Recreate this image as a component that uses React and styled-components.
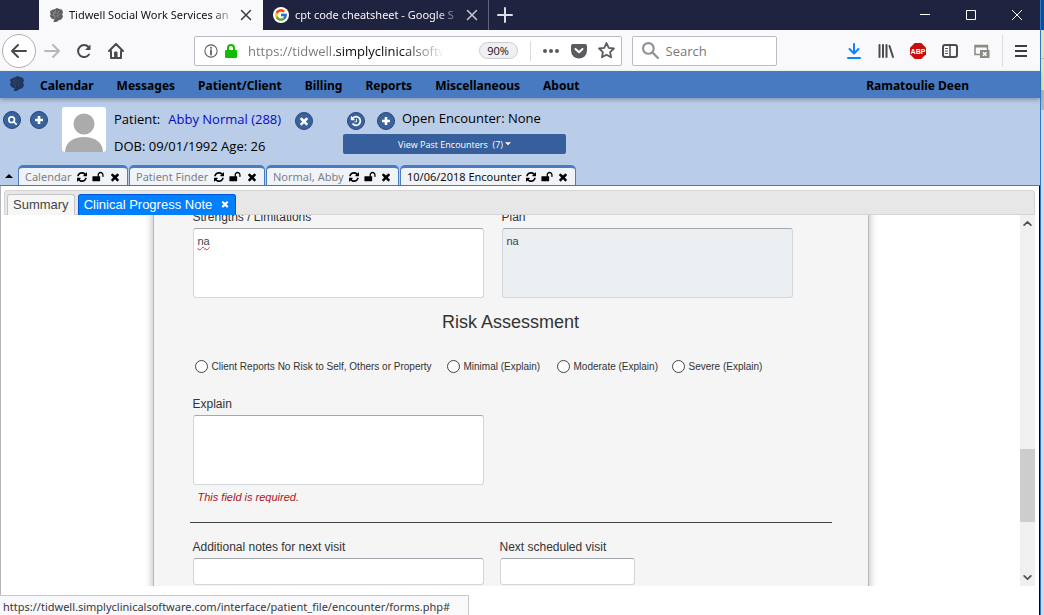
import React from 'react';
import styled, { createGlobalStyle } from 'styled-components';
import { FcGoogle } from 'react-icons/fc';

const ui = '"Open Sans", "Noto Sans", sans-serif';
const compact = '"Noto Sans", "Open Sans", sans-serif';
const arial = '"Liberation Sans", Arial, sans-serif';

const Global = createGlobalStyle`
  * { box-sizing: border-box; }
  html, body, #root { height: 100%; margin: 0; }
  body { font-family: ${ui}; font-size: 12px; color: #000; background: #fff; overflow: hidden; }
  button, input, textarea { font: inherit; margin: 0; }
  button { padding: 0; border: 0; background: none; color: inherit; }
  a { color: inherit; text-decoration: none; }
  svg { display: block; flex: none; }
`;

const Desktop = styled.div`
  display: flex;
  height: 100%;
`;

const Window = styled.div`
  flex: 1;
  min-width: 0;
  display: flex;
  flex-direction: column;
`;

const Backdrop = styled.div`
  width: 4px;
  border-left: 1px solid #2b7cc8;
  background: linear-gradient(#144a93 0 30px, #e3e3a4 30px 58px, #b9bd8e 58px 59px, #e3e3a4 59px 90px, #b4b4b4 90px 110px, #d6d8dc 110px);
`;

/* Browser tab strip */
const TabStrip = styled.div`
  display: flex;
  height: 30px;
  padding-left: 39px;
  background: #20233f;
  color: #f5f5f8;
`;

const BrowserTab = styled.div`
  display: flex;
  align-items: center;
  gap: 6px;
  width: ${(p) => (p.$active ? 224 : 226)}px;
  padding: 0 10px;
  background: ${(p) => (p.$active ? '#f9f9fb' : 'transparent')};
  color: ${(p) => (p.$active ? '#111' : '#f5f5f8')};
  border-right: 1px solid ${(p) => (p.$active ? 'transparent' : '#62657c')};
`;

const TabTitle = styled.span`
  flex: 1;
  margin-right: -4px;
  overflow: hidden;
  white-space: nowrap;
  font-family: ${compact};
  font-size: 11px;
  line-height: 20px;
  mask-image: linear-gradient(90deg, #000 84%, transparent);
`;

const GoogleBadge = styled.span`
  padding: 1px;
  border-radius: 50%;
  background: #fff;
`;

const NewTab = styled.button`
  width: 32px;
  display: grid;
  place-items: center;
`;

const WindowButtons = styled.div`
  display: flex;
  margin-left: auto;
`;

const WindowButton = styled.button`
  width: 46px;
  display: grid;
  place-items: center;
`;

/* Browser toolbar */
const Toolbar = styled.div`
  display: flex;
  align-items: center;
  height: 41px;
  padding: 0 2px;
  background: #f9f9fb;
  color: #4a4a4f;
`;

const NavButtons = styled.div`
  display: flex;
  align-items: center;
  width: 192px;
`;

const ToolButton = styled.button`
  width: 32px;
  height: 32px;
  display: grid;
  place-items: center;
`;

const BackButton = styled(ToolButton)`
  width: 34px;
  height: 34px;
  border: 1px solid #aeaeb2;
  border-radius: 50%;
  background: #fff;
`;

const Field = styled.div`
  display: flex;
  align-items: center;
  min-width: 0;
  height: 30px;
  padding: 0 6px 0 9px;
  border: 1px solid #bbbbc4;
  border-radius: 2px;
  background: #fff;
`;

const UrlField = styled(Field)`
  flex: 410;
  gap: 7px;
  margin-right: 10px;
`;

const UrlInput = styled.input`
  flex: 1;
  min-width: 0;
  margin-left: 4px;
  padding: 0;
  border: 0;
  outline: 0;
  font-size: 13px;
  color: transparent;
  background: linear-gradient(90deg, #77777b 0 86px, #0c0c0d 86px 154px, #fff 196px);
  background-clip: text;
`;

const Zoom = styled.button`
  width: 39px;
  height: 17px;
  border: 1px solid #ccccd0;
  border-radius: 9px;
  background: #f0f0f2;
  color: #111;
  font-size: 11px;
  line-height: 14px;
`;

const UrlActions = styled.div`
  display: flex;
  align-items: center;
  gap: 11px;
  margin-left: 5px;
  padding-left: 11px;
  height: 20px;
  border-left: 1px solid #dcdce0;
`;

const SearchField = styled(Field)`
  flex: 128;
  gap: 7px;
`;

const SearchInput = styled.input`
  flex: 1;
  min-width: 0;
  padding: 0;
  border: 0;
  outline: 0;
  font-size: 13px;
  background: none;
  &::placeholder { color: #77777b; opacity: 1; }
`;

const Extensions = styled.div`
  display: flex;
  flex: 261;
  justify-content: flex-end;
`;

const MenuButton = styled(ToolButton)`
  margin-left: 4px;
  width: 36px;
  border-left: 1px solid #dcdce0;
`;

/* Application menu */
const AppMenu = styled.nav`
  position: relative;
  display: flex;
  align-items: center;
  gap: 23px;
  height: 27px;
  padding: 2px 71px 0 9px;
  background: #477ac1;
  box-shadow: 0 2px 4px rgba(60, 70, 90, 0.4);
  font-family: ${compact};
  font-size: 12px;
  font-weight: 700;
`;

const MenuLogo = styled.a`
  margin: 0 -7px 5px 0;
`;

const UserLink = styled.a`
  margin-left: auto;
`;

/* Patient header */
const PatientHeader = styled.header`
  display: flex;
  align-items: flex-start;
  height: 67px;
  padding: 9px 3px 0;
  background: #b9cce8;
  font-size: 13px;
`;

const RoundButton = styled.button`
  display: grid;
  place-items: center;
  width: 18px;
  height: 18px;
  border: 1px solid #26487c;
  border-radius: 50%;
  background: #3a629c;
  color: #fff;
`;

const HeaderTools = styled.div`
  display: flex;
  gap: 9px;
  width: 59px;
  padding-top: 4px;
`;

const Avatar = styled.div`
  width: 44px;
  height: 45px;
  margin-right: 8px;
  border-radius: 3px;
  background: #fff;
  overflow: hidden;
`;

const PatientInfo = styled.div`
  width: 229px;
`;

const InfoLine = styled.div`
  display: flex;
  align-items: center;
  height: 27px;
  padding-bottom: 4px;
  white-space: nowrap;
`;

const PatientLink = styled.a`
  margin: 0 auto 0 8px;
  color: #0a0ac0;
`;

const ClearButton = styled(RoundButton)`
  margin: 4px 30px 0 0;
`;

const Encounter = styled.div`
  width: 223px;
`;

const EncounterLine = styled.div`
  display: flex;
  align-items: center;
  gap: 7px;
  height: 27px;
  padding-left: 4px;
`;

const EncounterTitle = styled.span`
  line-height: 20px;
  padding-bottom: 5px;
`;

const HistoryButton = styled(RoundButton)`
  margin-right: 5px;
`;

const PastButton = styled.button`
  display: flex;
  align-items: center;
  justify-content: center;
  gap: 2px;
  width: 100%;
  height: 20px;
  border-radius: 2px;
  background: #375f9b;
  color: #fff;
  font-size: 9px;
`;

const AppTabs = styled.div`
  display: flex;
  gap: 1px;
  height: 21px;
  padding-left: 5px;
  background: #b9cce8;
  border-bottom: 1px solid #4179c0;
`;

const Collapse = styled.button`
  width: 12px;
`;

const AppTab = styled.div`
  display: flex;
  align-items: center;
  gap: 4px;
  width: ${(p) => p.$width}px;
  padding: 0 6px;
  border: 1px solid #4a7cc2;
  border-top-width: 3px;
  border-bottom: 0;
  border-radius: 5px 5px 0 0;
  background: #f0f4f9;
  color: ${(p) => (p.$active ? '#111' : '#7d7f83')};
`;

const AppTabName = styled.span`
  flex: 1;
  font-family: ${compact};
  font-size: 11px;
  line-height: 16px;
  white-space: nowrap;
`;

const IconButton = styled.button`
  color: #000;
  width: 13px;
  display: grid;
  place-items: center;
`;

/* Encounter frame */
const Frame = styled.main`
  flex: 1;
  min-height: 0;
  display: flex;
  flex-direction: column;
  padding: 4px 4px 29px 0;
  border-left: 1px solid #b5b5bb;
  border-right: 1px solid #000;
  background: #fff;
  font-family: ${arial};
`;

const NoteTabs = styled.div`
  display: flex;
  align-items: flex-end;
  gap: 3px;
  height: 25px;
  margin-left: 3px;
  padding-left: 2px;
  border: 1px solid #d4d4d4;
  border-radius: 3px 3px 0 0;
  background: #e7e7e7;
`;

const NoteTab = styled.button`
  display: flex;
  align-items: center;
  gap: 8px;
  height: 21px;
  padding: 0 5px 2px;
  margin-bottom: -1px;
  border: 1px solid ${(p) => (p.$active ? '#0055d4' : '#c5c5c5')};
  border-bottom: 0;
  border-radius: 3px 3px 0 0;
  background: ${(p) => (p.$active ? '#007fff' : '#f6f6f6')};
  color: ${(p) => (p.$active ? '#fff' : '#454545')};
  font-size: 13px;
`;

const Pane = styled.div`
  flex: 1;
  min-height: 0;
  display: flex;
  overflow: hidden;
`;

const PaneBody = styled.div`
  flex: 1;
  height: 100%;
  overflow: hidden;
`;

const Form = styled.form`
  max-width: 716px;
  min-height: 110%;
  margin: -7px auto 0;
  padding: 0 36px;
  border: 1px solid #b9b9b9;
  background: #f5f5f5;
  box-shadow: 0 0 8px rgba(0, 0, 0, 0.3);
  color: #333;
  font-size: 12px;
`;

const FieldRow = styled.div`
  display: grid;
  grid-template-columns: 291px ${(p) => (p.$narrow ? '135px' : '291px')};
  gap: ${(p) => (p.$narrow ? 16 : 18)}px;
  padding: 0 3px;
`;

const Label = styled.label`
  display: block;
  height: 19px;
  line-height: 16px;
`;

const TextArea = styled.textarea`
  display: block;
  width: 100%;
  height: 70px;
  padding: 6px 4px;
  border: 1px solid #d3d6da;
  border-top-color: #a3a8ae;
  border-radius: 3px;
  resize: none;
  outline: 0;
  background: ${(p) => (p.$filled ? '#ebeff1' : '#fff')};
  color: #444;
  font-size: 11px;
  line-height: 13px;
  text-decoration: ${(p) => (p.$misspelt ? 'underline wavy #c0392b 1px' : 'none')};
`;

const TextBox = styled.input`
  display: block;
  width: 100%;
  height: 27px;
  border: 1px solid #d3d6da;
  border-top-color: #a3a8ae;
  border-radius: 3px;
  background: #fff;
`;

const Heading = styled.h2`
  margin: 12px 0 21px;
  font-size: 18px;
  font-weight: 400;
  line-height: 24px;
  text-align: center;
`;

const Options = styled.div`
  display: grid;
  grid-template-columns: 252px 110px 115px auto;
  align-items: center;
  height: 22px;
  margin-bottom: 19px;
  padding-left: 5px;
  white-space: nowrap;
`;

const Option = styled.label`
  display: flex;
  align-items: center;
  gap: 4px;
  font-size: 10px;
`;

const Radio = styled.input`
  appearance: none;
  flex: none;
  width: 13px;
  height: 13px;
  border: 1px solid #444;
  border-radius: 50%;
  background: #fff;
`;

const ErrorText = styled.p`
  margin: 4px 8px 0;
  color: #b01217;
  font-size: 11px;
  font-style: italic;
  line-height: 16px;
`;

const Rule = styled.hr`
  margin: 17px 0 16px;
  border: 0;
  border-top: 1px solid #444;
`;

const ScrollBar = styled.div`
  display: flex;
  flex-direction: column;
  width: 15px;
  background: #f0f0f0;
  color: #505050;
`;

const ScrollButton = styled.button`
  display: grid;
  place-items: center;
  height: 17px;
`;

const Track = styled.div`
  flex: 1;
  display: flex;
  flex-direction: column;
`;

const Thumb = styled.div`
  flex: 0 0 73px;
  background: #cdcdcd;
`;

const TrackGap = styled.div`
  flex: ${(p) => p.$share};
`;

const StatusBar = styled.div`
  position: fixed;
  left: 0;
  bottom: 0;
  height: 20px;
  padding: 1px 18px 0 3px;
  border: 1px solid #c8c8cc;
  border-left: 0;
  border-bottom: 0;
  background: #f9f9fb;
  color: #38383d;
  font-family: ${compact};
  font-size: 11px;
  line-height: 20px;
`;

const glyphs = {
  refresh: ['0 0 1536 1792', 'M1511 1056q0 5-1 7-64 268-268 434.5t-478 166.5q-146 0-282.5-55t-243.5-157l-129 129q-19 19-45 19t-45-19-19-45v-448q0-26 19-45t45-19h448q26 0 45 19t19 45-19 45l-137 137q71 66 161 102t187 36q134 0 250-65t186-179q11-17 53-117 8-23 30-23h192q13 0 22.5 9.5t9.5 22.5zm25-800v448q0 26-19 45t-45 19h-448q-26 0-45-19t-19-45 19-45l138-138q-148-137-349-137-134 0-250 65t-186 179q-11 17-53 117-8 23-30 23h-199q-13 0-22.5-9.5t-9.5-22.5v-7q65-268 270-434.5t480-166.5q146 0 284 55.5t245 156.5l130-129q19-19 45-19t45 19 19 45z'],
  times: ['0 0 1792 1792', 'M1490 1322q0 40-28 68l-136 136q-28 28-68 28t-68-28l-294-294-294 294q-28 28-68 28t-68-28l-136-136q-28-28-28-68t28-68l294-294-294-294q-28-28-28-68t28-68l136-136q28-28 68-28t68 28l294 294 294-294q28-28 68-28t68 28l136 136q28 28 28 68t-28 68l-294 294 294 294q28 28 28 68z'],
  unlock: ['0 0 1792 1792', 'M1728 576v256q0 26-19 45t-45 19h-64q-26 0-45-19t-19-45v-256q0-106-75-181t-181-75-181 75-75 181v192h96q40 0 68 28t28 68v576q0 40-28 68t-68 28h-960q-40 0-68-28t-28-68v-576q0-40 28-68t68-28h672v-192q0-185 131.5-316.5t316.5-131.5 316.5 131.5 131.5 316.5z'],
  history: ['0 0 1792 1792', 'M1664 896q0 156-61 298t-164 245-245 164-298 61q-172 0-327-72.5t-264-204.5q-7-10-6.5-22.5t8.5-20.5l137-138q10-9 25-9 16 2 23 12 73 95 179 147t225 52q104 0 198.5-40.5t163.5-109.5 109.5-163.5 40.5-198.5-40.5-198.5-109.5-163.5-163.5-109.5-198.5-40.5q-98 0-188 35.5t-160 101.5l137 138q31 30 14 69-17 40-59 40h-448q-26 0-45-19t-19-45v-448q0-42 40-59 39-17 69 14l130 129q107-101 244.5-156.5t284.5-55.5q156 0 298 61t245 164 164 245 61 298zm-640-288v448q0 14-9 23t-23 9h-320q-14 0-23-9t-9-23v-64q0-14 9-23t23-9h224v-352q0-14 9-23t23-9h64q14 0 23 9t9 23z'],
  plus: ['0 0 10 10', 'M3.7 1h2.6v2.7H9v2.6H6.3V9H3.7V6.3H1V3.7h2.7z'],
  up: ['0 0 8 5', 'M0 5L4 1L8 5z'],
  down: ['0 0 8 5', 'M0 0L4 4L8 0z'],
};

const Glyph = ({ name, size = 12, height = size }) => (
  <svg width={size} height={height} viewBox={glyphs[name][0]} fill="currentColor" aria-hidden="true">
    <path d={glyphs[name][1]} />
  </svg>
);

const Line = ({ size = 16, width = 2, color = 'currentColor', box = 16, children }) => (
  <svg width={size} height={size} viewBox={`0 0 ${box} ${box}`} fill="none" stroke={color} strokeWidth={width} strokeLinecap="round" strokeLinejoin="round" aria-hidden="true">
    {children}
  </svg>
);

const TreeLogo = ({ size, dark }) => (
  <svg width={size} height={size} viewBox="0 0 16 16" aria-hidden="true">
    <path d="M5 16l1-3-3-1-2-3 1-2-1-3 3-2 3-1 2-1 3 1 3 1 1 3-1 2 1 3-2 3-3 1-1 1-2 1z" fill={dark ? '#1d2c4d' : '#4c4c4c'} opacity="0.9" />
    <path d="M4 4l3 3M7 2l1 4M12 3L9 7M3 8l4 1M13 7l-4 2M11 11l-2-2M6 5l-1 3M7 9l-1 5" stroke={dark ? '#35507f' : '#a5a5a5'} strokeWidth="0.7" fill="none" />
  </svg>
);

const menu = ['Calendar', 'Messages', 'Patient/Client', 'Billing', 'Reports', 'Miscellaneous', 'About'];

const tabs = [
  { name: 'Calendar', width: 110 },
  { name: 'Patient Finder', width: 136 },
  { name: 'Normal, Abby', width: 133 },
  { name: '10/06/2018 Encounter', width: 176, active: true },
];

const risks = ['Client Reports No Risk to Self, Others or Property', 'Minimal (Explain)', 'Moderate (Explain)', 'Severe (Explain)'];

export default function App() {
  return (
    <Desktop>
      <Global />
      <Window>
        <TabStrip>
          <BrowserTab $active>
            <TreeLogo size={14} />
            <TabTitle>Tidwell Social Work Services an</TabTitle>
            <button aria-label="Close tab"><Line size={12} width={2} color="#3c3c40"><path d="M2 2l12 12M14 2L2 14" /></Line></button>
          </BrowserTab>
          <BrowserTab>
            <GoogleBadge><FcGoogle size={14} /></GoogleBadge>
            <TabTitle>cpt code cheatsheet - Google S</TabTitle>
            <button aria-label="Close tab"><Line size={12} width={2} color="#c9c9d2"><path d="M2 2l12 12M14 2L2 14" /></Line></button>
          </BrowserTab>
          <NewTab aria-label="New tab"><Line size={16} color="#dcdce4"><path d="M8 1v14M1 8h14" /></Line></NewTab>
          <WindowButtons>
            <WindowButton aria-label="Minimize"><svg width="10" height="10" aria-hidden="true"><path d="M0 4.5h10" stroke="#fff" /></svg></WindowButton>
            <WindowButton aria-label="Maximize"><svg width="10" height="10" aria-hidden="true"><path d="M.5 .5h9v9h-9z" stroke="#fff" fill="none" /></svg></WindowButton>
            <WindowButton aria-label="Close"><svg width="10" height="10" aria-hidden="true"><path d="M0 0l10 10M10 0L0 10" stroke="#fff" /></svg></WindowButton>
          </WindowButtons>
        </TabStrip>

        <Toolbar>
          <NavButtons>
            <BackButton aria-label="Back"><Line><path d="M15 8H1M7 2L1 8l6 6" /></Line></BackButton>
            <ToolButton aria-label="Forward"><Line color="#b8b8bc"><path d="M1 8h14M9 2l6 6-6 6" /></Line></ToolButton>
            <ToolButton aria-label="Reload">
              <Line><path d="M13 11.500A6 6 0 1 1 12.500 4" /><path d="M14.500 1.500v5.500H9z" fill="currentColor" stroke="none" /></Line>
            </ToolButton>
            <ToolButton aria-label="Home">
              <Line><path d="M1 8l7-7 7 7M3 8v7h10V8" /><path d="M7 9h2v6H7z" fill="currentColor" strokeWidth="1" /></Line>
            </ToolButton>
          </NavButtons>
          <UrlField>
            <Line size={14} width={1.2} color="#5c5c60"><circle cx="8" cy="8" r="7" /><path d="M8 7v5M8 4v.5" strokeWidth="2" /></Line>
            <svg width="12" height="14" viewBox="0 0 12 14" aria-hidden="true">
              <path d="M3 7V4a3 3 0 0 1 6 0v3" fill="none" stroke="#12bc00" strokeWidth="2" />
              <rect y="6" width="12" height="8" rx="1" fill="#12bc00" />
            </svg>
            <UrlInput aria-label="Address" readOnly value="https://tidwell.simplyclinicalsoftware.com" />
            <Zoom>90%</Zoom>
            <UrlActions>
              <button aria-label="Page actions"><svg width="18" height="6" fill="#5a5a5f"><circle cx="3" cy="3" r="2" /><circle cx="9" cy="3" r="2" /><circle cx="15" cy="3" r="2" /></svg></button>
              <button aria-label="Save to Pocket">
                <svg width="16" height="16" viewBox="0 0 16 16"><path d="M2 1h12a2 2 0 0 1 2 2v4.500a8 8 0 0 1-16 0V3a2 2 0 0 1 2-2z" fill="#5a5a5f" /><path d="M4.500 6L8 9.300 11.500 6" fill="none" stroke="#fff" strokeWidth="2" strokeLinecap="round" strokeLinejoin="round" /></svg>
              </button>
              <button aria-label="Bookmark"><Line size={17} width={1.7} color="#5a5a5f"><path d="M8 1l2.100 4.500 4.900.6-3.600 3.400.9 4.900L8 12l-4.300 2.400.9-4.900L1 6.100l4.900-.6z" /></Line></button>
            </UrlActions>
          </UrlField>
          <SearchField>
            <Line color="#909094" size={17}><circle cx="6" cy="6" r="5" /><path d="M10 10l5 5" /></Line>
            <SearchInput aria-label="Search" placeholder="Search" />
          </SearchField>
          <Extensions>
            <ToolButton aria-label="Downloads"><Line color="#0a84ff"><path d="M8 1v9M3.500 6L8 10.500 12.500 6M2 15h12" /></Line></ToolButton>
            <ToolButton aria-label="Library"><Line width={2}><path d="M1.500 2v12M5 2v12M8.500 2v12M11.500 3l3.500 11" /></Line></ToolButton>
            <ToolButton aria-label="Adblock Plus">
              <svg width="16" height="16" viewBox="0 0 16 16"><path d="M4.700 0h6.600L16 4.700v6.600L11.300 16H4.700L0 11.300V4.700z" fill="#c70d0e" /><text x="8" y="10.500" textAnchor="middle" fontFamily={arial} fontWeight="700" fontSize="7" fill="#fff">ABP</text></svg>
            </ToolButton>
            <ToolButton aria-label="Sidebars"><Line width={2}><rect x="1" y="2" width="14" height="12" rx="2" /><path d="M8 2v12" strokeWidth="1.500" /><path d="M3.500 5.500h2M3.500 8h2M3.500 10.500h2" strokeWidth="1" /></Line></ToolButton>
            <ToolButton aria-label="Block window">
              <svg width="16" height="16" viewBox="0 0 16 16"><path d="M1 2.500h12.500v9H1z" fill="none" stroke="#8b8b84" strokeWidth="1.500" /><path d="M1 2h12.500v2.500H1z" fill="#8b8b84" /><path d="M6 7h9.500v8H6z" fill="#8b8b84" /><path d="M9 9.200l3.500 3.600M12.500 9.200L9 12.800" stroke="#fff" strokeWidth="1.500" /></svg>
            </ToolButton>
            <MenuButton aria-label="Open menu"><svg width="12" height="12" fill="#3c3c40"><path d="M0 0h12v2H0zM0 5h12v2H0zM0 10h12v2H0z" /></svg></MenuButton>
          </Extensions>
        </Toolbar>

        <AppMenu>
          <MenuLogo href="#" aria-label="Home"><TreeLogo size={15} dark /></MenuLogo>
          {menu.map((item) => <a href="#" key={item}>{item}</a>)}
          <UserLink href="#">Ramatoulie Deen</UserLink>
        </AppMenu>

        <PatientHeader>
          <HeaderTools>
            <RoundButton aria-label="Search patients"><Line size={9} width={3}><circle cx="6.500" cy="6.500" r="5" /><path d="M10.500 10.500l4 4" /></Line></RoundButton>
            <RoundButton aria-label="Add patient"><Glyph name="plus" size={10} /></RoundButton>
          </HeaderTools>
          <Avatar>
            <svg width="44" height="45" viewBox="0 0 44 45" fill="#ababab" aria-hidden="true"><circle cx="22" cy="17" r="10.500" /><path d="M3 45C3 35 12 30 22 30s19 5 19 15z" /></svg>
          </Avatar>
          <PatientInfo>
            <InfoLine>
              Patient: <PatientLink href="#">Abby Normal (288)</PatientLink>
              <ClearButton aria-label="Clear patient"><Glyph name="times" size={12} /></ClearButton>
            </InfoLine>
            <InfoLine>DOB: 09/01/1992 Age: 26</InfoLine>
          </PatientInfo>
          <Encounter>
            <EncounterLine>
              <HistoryButton aria-label="Encounter history"><Glyph name="history" size={12} /></HistoryButton>
              <RoundButton aria-label="New encounter"><Glyph name="plus" size={10} /></RoundButton>
              <EncounterTitle>Open Encounter: None</EncounterTitle>
            </EncounterLine>
            <PastButton>View Past Encounters&nbsp; (7) <Glyph name="down" size={6} height={4} /></PastButton>
          </Encounter>
        </PatientHeader>

        <AppTabs>
          <Collapse aria-label="Collapse header"><Glyph name="up" size={8} height={5} /></Collapse>
          {tabs.map((tab) => (
            <AppTab key={tab.name} $width={tab.width} $active={tab.active}>
              <AppTabName>{tab.name}</AppTabName>
              <IconButton aria-label="Refresh"><Glyph name="refresh" size={10} height={12} /></IconButton>
              <IconButton aria-label="Unlock"><Glyph name="unlock" size={12} /></IconButton>
              <IconButton aria-label="Close"><Glyph name="times" size={12} /></IconButton>
            </AppTab>
          ))}
        </AppTabs>

        <Frame>
          <NoteTabs>
            <NoteTab>Summary</NoteTab>
            <NoteTab $active>Clinical Progress Note <Glyph name="times" size={10} /></NoteTab>
          </NoteTabs>
          <Pane>
            <PaneBody>
              <Form>
                <FieldRow>
                  <div>
                    <Label htmlFor="strengths">Strengths / Limitations</Label>
                    <TextArea id="strengths" $misspelt defaultValue="na" />
                  </div>
                  <div>
                    <Label htmlFor="plan">Plan</Label>
                    <TextArea id="plan" $filled defaultValue="na" />
                  </div>
                </FieldRow>
                <Heading>Risk Assessment</Heading>
                <Options>
                  {risks.map((risk) => (
                    <Option key={risk}><Radio type="radio" name="risk" />{risk}</Option>
                  ))}
                </Options>
                <FieldRow>
                  <div>
                    <Label htmlFor="explain">Explain</Label>
                    <TextArea id="explain" />
                  </div>
                </FieldRow>
                <ErrorText>This field is required.</ErrorText>
                <Rule />
                <FieldRow $narrow>
                  <div>
                    <Label htmlFor="notes">Additional notes for next visit</Label>
                    <TextBox id="notes" />
                  </div>
                  <div>
                    <Label htmlFor="visit">Next scheduled visit</Label>
                    <TextBox id="visit" />
                  </div>
                </FieldRow>
              </Form>
            </PaneBody>
            <ScrollBar>
              <ScrollButton aria-label="Scroll up"><Line size={9} width={3}><path d="M2 11l6-6 6 6" /></Line></ScrollButton>
              <Track><TrackGap $share={217} /><Thumb /><TrackGap $share={47} /></Track>
              <ScrollButton aria-label="Scroll down"><Line size={9} width={3}><path d="M2 5l6 6 6-6" /></Line></ScrollButton>
            </ScrollBar>
          </Pane>
        </Frame>
      </Window>
      <Backdrop />
      <StatusBar>https://tidwell.simplyclinicalsoftware.com/interface/patient_file/encounter/forms.php#</StatusBar>
    </Desktop>
  );
}
